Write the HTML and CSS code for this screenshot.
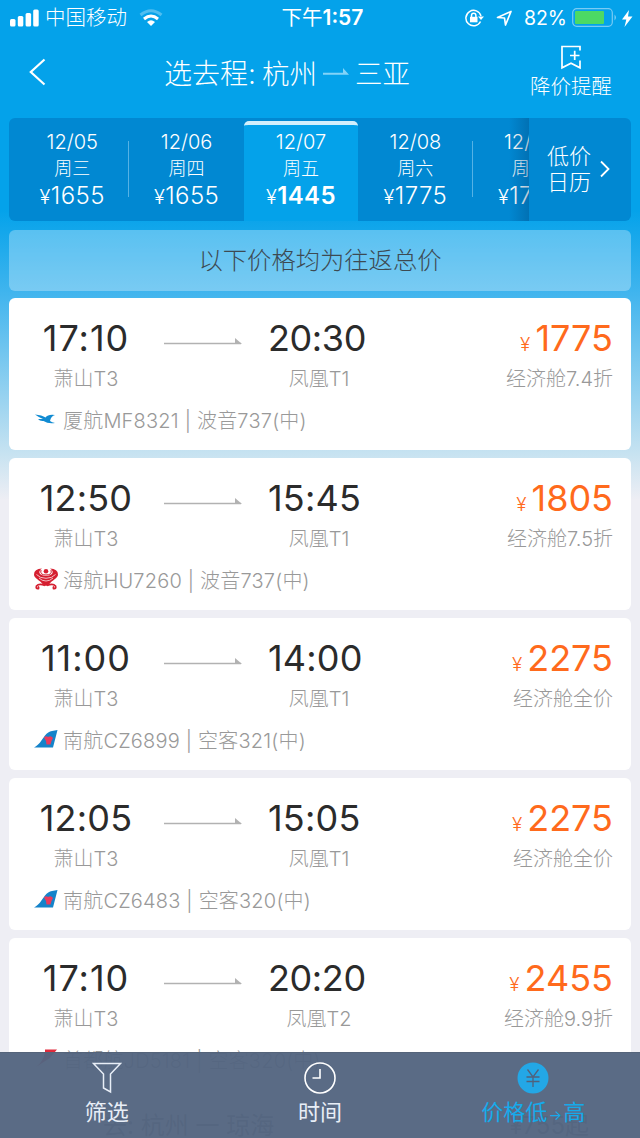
FILE: index.html
```html
<!DOCTYPE html>
<html lang="zh-CN">
<head>
<meta charset="utf-8">
<title>选去程</title>
<link rel="stylesheet" href="styles.css">
</head>
<body>
<svg class="defs" width="0" height="0">
  <symbol id="route" viewBox="0 0 78 8"><path d="M0 6.500H77" stroke="#b2b2b2" stroke-width="1.600"/><path d="M71 1L78 7H71Z" fill="#b2b2b2"/></symbol>
  <symbol id="southern" viewBox="0 0 24 18"><path d="M0 17.500C5 15 7 11 11 5.500Q14 1.500 18 1L23.500 0L19 17.500Z" fill="#1583ca"/><path d="M10 7.500Q12 5.500 14 7Q17 5 19 8L17.500 11L16.500 14.500H12.500L12 11Z" fill="#e93b5d"/></symbol>
</svg>
<div class="app">
  <div class="status">
    <div class="status-left">
      <svg width="29" height="18" viewBox="0 0 29 18" fill="#fff"><rect x="0" y="10" width="5.500" height="7.500" rx="1.500"/><rect x="7.800" y="7" width="5.500" height="10.500" rx="1.500"/><rect x="15.600" y="4" width="5.500" height="13.500" rx="1.500"/><rect x="23.200" y="0.500" width="5.500" height="17" rx="1.500"/></svg>
      <span class="carrier">中国移动</span>
      <svg class="wifi" width="24" height="18" viewBox="0 0 24 18" fill="none" stroke="#fff"><path d="M1.500 6Q12-2.500 22.500 6" stroke-width="3" opacity=".3"/><path d="M5 10Q12 4 19 10" stroke-width="3"/><path d="M8 13Q12 9.500 16 13L12 17Z" fill="#fff" stroke="none"/></svg>
    </div>
    <div class="clock"><span class="ampm">下午</span>1:57</div>
    <div class="status-right">
      <svg width="19" height="18" viewBox="0 0 19 18" fill="none" stroke="#fff" stroke-width="1.500"><path d="M15.500 12.500A7.700 7.700 0 1 1 16 7"/><path d="M13 7.500H19L16 11Z" fill="#fff" stroke="none"/><rect x="5" y="7.800" width="7.500" height="5.500" fill="#fff" stroke="none"/><path d="M6.500 8V6.500a2.200 2.200 0 0 1 4.400 0V8"/></svg>
      <svg class="locate" width="17" height="17" viewBox="0 0 17 17" fill="none" stroke="#fff" stroke-width="1.700"><path d="M1.500 7.500L15 1.500L9.500 15L8.500 8Z" stroke-linejoin="round"/></svg>
      <span class="percent">82%</span>
      <svg class="battery" width="46" height="20" viewBox="0 0 46 20"><rect x=".7" y=".7" width="39.600" height="17.600" rx="4" fill="none" stroke="#7acbf4" stroke-width="1.200"/><rect x="3" y="3" width="29" height="13" rx="1" fill="#4cd964"/><path d="M42.500 6.500Q45.500 9.500 42.500 12.500Z" fill="#7acbf4"/></svg>
      <svg width="11" height="17" viewBox="0 0 11 17"><path d="M7 0L0 9.500H4.300L2.500 17L10.500 6.500H6Z" fill="#fff"/></svg>
    </div>
  </div>

  <div class="nav">
    <svg class="back" width="17" height="28" viewBox="0 0 17 28" fill="none" stroke="#fff" stroke-width="2.200"><path d="M15.500 1.500L1.800 14L15.500 26.500"/></svg>
    <div class="title"><span class="title-label">选去程:</span><span>杭州</span>
      <svg width="26" height="8" viewBox="0 0 26 8" fill="#83d3f8"><path d="M0 4.800H20V0L26 6.700H0Z"/></svg>
      <span>三亚</span></div>
    <div class="alert">
      <svg width="20" height="25" viewBox="0 0 20 25" fill="none" stroke="#fff" stroke-width="1.700"><path d="M19 5.500V1.500H1V22.800L10 18.300L19 22.800V15.500M9 10.500H18.500M13.700 5.700V15"/></svg>
      <span>降价提醒</span>
    </div>
  </div>

  <div class="dates">
    <div class="days">
      <div class="day line"><span>12/05</span><span class="week">周三</span><span class="fare"><i>¥</i>1655</span></div>
      <div class="day"><span>12/06</span><span class="week">周四</span><span class="fare"><i>¥</i>1655</span></div>
      <div class="day active"><span>12/07</span><span class="week">周五</span><span class="fare"><i>¥</i>1445</span></div>
      <div class="day line"><span>12/08</span><span class="week">周六</span><span class="fare"><i>¥</i>1775</span></div>
      <div class="day"><span>12/09</span><span class="week">周日</span><span class="fare"><i>¥</i>1775</span></div>
    </div>
    <div class="calendar"><span>低价<br>日历</span><svg width="10" height="18" viewBox="0 0 10 18" fill="none" stroke="#fff" stroke-width="1.800"><path d="M1 1.500L8.500 9L1 16.500"/></svg></div>
  </div>

  <div class="notice">以下价格均为往返总价</div>

  <div class="list">
    <div class="card">
      <div class="main">
        <div class="from"><span class="time loose">17:10</span><span class="port">萧山T3</span></div>
        <svg class="route" width="78" height="8"><use href="#route"/></svg>
        <div class="to"><span class="time tight">20:30</span><span class="port">凤凰T1</span></div>
        <div class="price"><span class="amount"><i>¥</i>1775</span><span class="port">经济舱7.4折</span></div>
      </div>
      <div class="flight"><svg width="24" height="20" viewBox="0 0 24 20"><path d="M1 5.500Q8 6 11.500 8.500Q14 5 21 6Q17 7 16 12Q18 13.500 21 14Q14 15 9.500 12Q6 12.500 4 10L9 10Q5 8.500 1 5.500Z" fill="#118bd2"/></svg>厦航MF8321 | 波音737(中)</div>
    </div>
    <div class="card">
      <div class="main">
        <div class="from"><span class="time">12:50</span><span class="port">萧山T3</span></div>
        <svg class="route" width="78" height="8"><use href="#route"/></svg>
        <div class="to"><span class="time">15:45</span><span class="port">凤凰T1</span></div>
        <div class="price"><span class="amount"><i>¥</i>1805</span><span class="port">经济舱7.5折</span></div>
      </div>
      <div class="flight"><svg width="24" height="22" viewBox="0 0 24 22" fill="none" stroke="#d51f30"><path d="M8 0.500Q0 1 0 6.500C0 10.500 6 12 9 16.500L12 18L15 16.500C18 12 24 10.500 24 6.500Q24 1 16 .5Q20 3 18 6Q12 10 6 6Q4 3 8 .5Z" fill="#d51f30" stroke="none"/><path d="M2.500 6.500Q6 10.300 12 10.300T21.500 6.500M5 10Q8 13 12 13T19 10" stroke="#fff" stroke-width=".7"/><path d="M7 2Q5.500 7 12 7T17 2" stroke-width="1"/><circle cx="12" cy="3.300" r="2.300" fill="#d51f30" stroke="none"/><path d="M11 17.500Q5 15 2.500 18Q1.500 21 4.500 20.500Q5 19 4 18.500M13 17.500Q19 15 21.500 18Q22.500 21 19.500 20.500Q19 19 20 18.500" stroke-width="1.800"/></svg>海航HU7260 | 波音737(中)</div>
    </div>
    <div class="card">
      <div class="main">
        <div class="from"><span class="time loose">11:00</span><span class="port">萧山T3</span></div>
        <svg class="route" width="78" height="8"><use href="#route"/></svg>
        <div class="to"><span class="time">14:00</span><span class="port">凤凰T1</span></div>
        <div class="price"><span class="amount"><i>¥</i>2275</span><span class="port">经济舱全价</span></div>
      </div>
      <div class="flight"><svg width="24" height="18"><use href="#southern"/></svg>南航CZ6899 | 空客321(中)</div>
    </div>
    <div class="card">
      <div class="main">
        <div class="from"><span class="time">12:05</span><span class="port">萧山T3</span></div>
        <svg class="route" width="78" height="8"><use href="#route"/></svg>
        <div class="to"><span class="time">15:05</span><span class="port">凤凰T1</span></div>
        <div class="price"><span class="amount"><i>¥</i>2275</span><span class="port">经济舱全价</span></div>
      </div>
      <div class="flight"><svg width="24" height="18"><use href="#southern"/></svg>南航CZ6483 | 空客320(中)</div>
    </div>
    <div class="card last">
      <div class="main">
        <div class="from"><span class="time loose">17:10</span><span class="port">萧山T3</span></div>
        <svg class="route" width="78" height="8"><use href="#route"/></svg>
        <div class="to"><span class="time tight">20:20</span><span class="port">凤凰T2</span></div>
        <div class="price"><span class="amount"><i>¥</i>2455</span><span class="port">经济舱9.9折</span></div>
      </div>
      <div class="flight"><svg width="24" height="20" viewBox="0 0 24 20"><path d="M2 18Q9 13 11 3V.5H23L16 9Z" fill="#e12b3c"/></svg>首都航JD5181 | 空客320(中)</div>
      <div class="more"><span>去: 杭州 一 琼海</span><span>¥755起</span></div>
    </div>
  </div>

  <div class="tabs">
    <div class="tab"><svg width="30" height="32" viewBox="0 0 30 32" fill="none" stroke="#e8eef7" stroke-width="1.500"><path d="M1.500 1.500H28.500L18.500 12V30L11.500 26V12Z"/></svg><span>筛选</span></div>
    <div class="tab"><svg width="32" height="32" viewBox="0 0 32 32" fill="none" stroke="#fff" stroke-width="1.600"><circle cx="16" cy="16" r="15"/><path d="M8.500 16H16V7"/></svg><span>时间</span></div>
    <div class="tab on"><svg width="32" height="32" viewBox="0 0 32 32"><circle cx="16" cy="16" r="15.500" fill="#23a7e6"/><path d="M10.500 7.500L16 15L21.500 7.500M16 15V25M9.500 15H22.500M9.500 19.500H22.500" fill="none" stroke="#50617c" stroke-width="1.300"/></svg><span>价格低<em>→</em>高</span></div>
  </div>
</div>
</body>
</html>
```
FILE: styles.css
```css
* { box-sizing: border-box; }
body { margin: 0; }
i, em { font-style: normal; }
svg { display: block; flex: none; }
.defs { position: absolute; }
.app {
  position: relative;
  width: 640px;
  height: 1138px;
  overflow: hidden;
  display: flex;
  flex-direction: column;
  font-family: Inter, "Noto Sans CJK SC", sans-serif;
  font-weight: 300;
  white-space: nowrap;
  color: #fff;
  background: linear-gradient(#04a2ea 0, #04a2ea 210px, #42b5ee 295px, #c8e3f1 455px, #eeeef4 500px);
}

.status { flex: none; display: grid; grid-template-columns: 1fr auto 1fr; height: 36px; padding: 0 7px 0 10px; align-items: center; line-height: 36px; }
.status-left, .status-right { display: flex; align-items: center; }
.status-right { justify-content: flex-end; }
.carrier { font-size: 20.5px; margin-left: 6px; }
.wifi { margin-left: 12px; }
.clock { font-size: 21px; font-weight: 600; padding-left: 2px; }
.ampm { font-size: 20.5px; font-weight: 400; }
.locate { margin-left: 12px; }
.percent { font-size: 19.5px; font-weight: 400; margin: 0 5px 0 11px; }
.battery { margin-right: 4px; }

.nav { flex: none; display: flex; height: 82px; }
.back { margin: 22px 0 0 29px; }
.title { display: flex; align-items: center; height: 71px; margin-left: 118px; font-size: 27.5px; gap: 6px; }
.title-label { font-size: 28px; }
.alert { display: flex; flex-direction: column; align-items: center; margin: 9px 28px 0 auto; font-size: 20.5px; line-height: 30px; gap: 2px; }

.dates { display: flex; flex: none; height: 103px; margin: 0 9px; border-radius: 6px; background: #0188d2; overflow: hidden; }
.days { position: relative; display: flex; width: 520px; padding: 3px 0 0 6px; overflow: hidden; }
.days::after { content: ""; position: absolute; right: 0; top: 0; width: 20px; height: 103px; background: linear-gradient(90deg, rgba(0,60,110,0), rgba(0,60,110,.3)); }
.day { position: relative; flex: none; width: 114.4px; padding-top: 8px; display: flex; flex-direction: column; align-items: center; font-size: 20px; line-height: 26px; font-weight: 350; }
.day.line::after { content: ""; position: absolute; right: 0; top: 20px; width: 1px; height: 56px; background: #55b2e5; }
.week { font-size: 18px; font-weight: 300; line-height: 27px; }
.fare { font-size: 24px; line-height: 28px; height: 28px; letter-spacing: .4px; }
.fare i { font-size: 20px; font-weight: 300; line-height: 20px; }
.day.active { background: #04a2ea; border-top: 4px solid #d2effc; padding-top: 4px; border-radius: 5px 5px 0 0; }
.active .fare { font-weight: 600; }
.calendar { display: flex; flex: 1; align-items: center; padding: 0 0 1px 18px; gap: 9px; font-size: 22px; line-height: 26px; }

.notice { flex: none; height: 61px; margin: 8.5px 9px 0; border-radius: 6px; background: rgba(255,255,255,.3); color: #3d4a52; font-size: 24.3px; line-height: 61px; text-align: center; }

.list { display: flex; flex-direction: column; gap: 8px; padding: 7.5px 9px 0; }
.card { flex: none; height: 152px; border-radius: 6px; background: #fff; color: #999; }
.main { display: flex; height: 103px; padding-right: 18px; }
.from { display: flex; flex-direction: column; align-items: center; width: 154px; padding-top: 18px; }
.route { margin: 39px 0 0 1px; }
.to { display: flex; flex-direction: column; width: 102px; margin-left: 26px; padding-top: 18px; }
.to .port { text-align: center; }
.time { color: #2b2b2b; font-size: 36px; line-height: 44px; font-weight: 400; letter-spacing: .2px; }
.time.loose { letter-spacing: 1px; }
.time.tight { letter-spacing: -.4px; }
.port { font-size: 20px; line-height: 38px; }
.price { display: flex; flex-direction: column; align-items: flex-end; margin-left: auto; padding-top: 18px; }
.amount { height: 44px; color: #ff6a1c; font-size: 36px; line-height: 44px; font-weight: 400; }
.amount i { font-size: 19px; font-weight: 300; line-height: 19px; margin-right: 5px; }
.flight { display: flex; align-items: center; gap: 5px; height: 36px; padding-left: 25px; font-size: 20px; letter-spacing: .2px; }
.card.last { height: 240px; }
.more { display: flex; justify-content: space-between; padding: 29px 42px 0 94px; font-size: 24px; color: #777; font-weight: 400; }

.tabs { position: absolute; left: 0; right: 0; bottom: 0; display: grid; grid-template-columns: repeat(3, 1fr); height: 86px; background: rgba(83,101,128,.96); border-top: 1px solid #55647a; }
.tab { display: flex; flex-direction: column; align-items: center; padding-top: 9px; font-size: 22px; line-height: 36px; font-weight: 400; color: #e8eef7; }
.tab.on { color: #16aaeb; }
.tab em { display: inline-block; width: 16px; font-size: 14px; text-align: center; }
```
